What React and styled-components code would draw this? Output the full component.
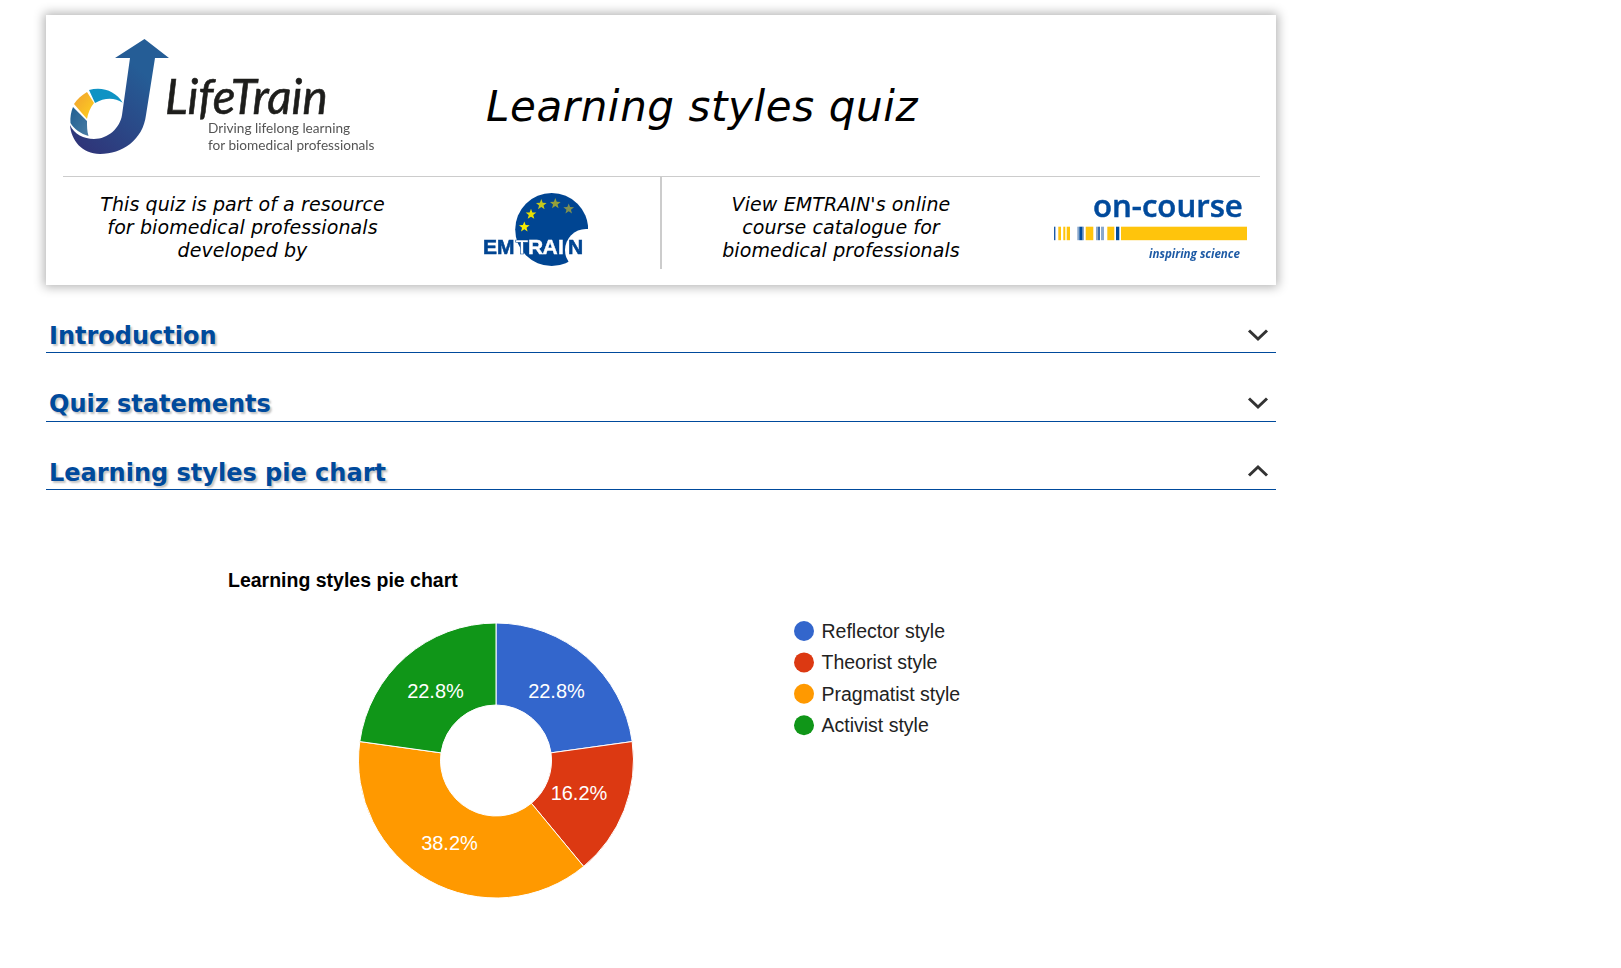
import React from "react";
import styled, { createGlobalStyle } from "styled-components";

const GlobalStyle = createGlobalStyle`
  html, body {
    margin: 0;
    padding: 0;
    background: #ffffff;
  }
  body {
    font-family: "DejaVu Sans", Verdana, sans-serif;
  }
`;

const Page = styled.div`
  width: 1230px;
  margin-left: 46px;
  padding-top: 15px;
`;

const HeaderCard = styled.header`
  height: 270px;
  box-sizing: border-box;
  padding: 0 16px 0 17px;
  background: #ffffff;
  box-shadow: 0 0 10px 2px rgba(0, 0, 0, 0.3);
  display: flex;
  flex-direction: column;
`;

const TopRow = styled.div`
  height: 161px;
  display: flex;
  align-items: flex-start;
  border-bottom: 1px solid #cccccc;
`;

const LifeTrainLogo = styled.svg`
  width: 340px;
  height: 130px;
  margin-top: 24px;
  flex: none;
  filter: blur(0.3px);
`;

const Title = styled.h1`
  margin: 68px 0 0 83px;
  font-size: 42px;
  line-height: 48px;
  letter-spacing: 0.6px;
  font-weight: 400;
  font-style: italic;
  color: #000000;
  white-space: nowrap;
`;

const BottomRow = styled.div`
  height: 92px;
  display: flex;
`;

const Half = styled.div`
  flex: none;
  width: ${(props) => props.$width}px;
  display: flex;
  align-items: flex-start;
  border-right: ${(props) => (props.$divided ? "2px solid #cccccc" : "none")};
  box-sizing: border-box;
`;

const Blurb = styled.p`
  margin: 16px 0 0;
  flex: none;
  width: ${(props) => props.$width}px;
  font-size: 19px;
  line-height: 23px;
  letter-spacing: 0.1px;
  font-style: italic;
  text-align: center;
  color: #000000;
`;

const EmtrainLogo = styled.svg`
  width: 110px;
  height: 80px;
  margin: 12px 0 0 ${(props) => props.$gap}px;
  flex: none;
  filter: blur(0.3px);
`;

const OnCourseLogo = styled.svg`
  width: 200px;
  height: 92px;
  margin: 2px 0 0 ${(props) => props.$gap}px;
  flex: none;
  filter: blur(0.3px);
`;

const Section = styled.section`
  margin-top: ${(props) => props.$top}px;
`;

const SectionHead = styled.div`
  height: 36px;
  box-sizing: border-box;
  padding: 0 4px ${(props) => props.$lift || 0}px 3px;
  display: flex;
  align-items: center;
  justify-content: space-between;
  border-bottom: 1px solid #004a9c;
`;

const SectionTitle = styled.h2`
  margin: 2px 0 0;
  font-size: 24px;
  line-height: 34px;
  font-weight: 700;
  color: #004a9c;
  text-shadow: 2px 2px 2px #c4c4c4;
`;

const Chevron = styled.svg`
  width: 24px;
  height: 14px;
  flex: none;
  margin: 0 2px ${(props) => (props.$open ? "2px" : "0")} 0;
  transform: ${(props) => (props.$open ? "rotate(180deg)" : "none")};
`;

const ChartSvg = styled.svg`
  display: block;
  width: 1230px;
  height: 470px;
`;

const slices = [
  { label: "Reflector style", value: 22.8, color: "#3366cc", tx: 556.5, ty: 698 },
  { label: "Theorist style", value: 16.2, color: "#dc3912", tx: 579, ty: 800 },
  { label: "Pragmatist style", value: 38.2, color: "#ff9900", tx: 449.5, ty: 850 },
  { label: "Activist style", value: 22.8, color: "#109618", tx: 435.5, ty: 698 },
];

const CX = 496;
const CY = 760.5;
const R = 137.5;
const INNER = 55.5;
// chart drawing is in page coordinates, this is the top of the chart box
const CHART_TOP = 490;

const polar = (radius, angle) => [
  CX + radius * Math.sin(angle),
  CY - radius * Math.cos(angle),
];

const slicePath = (from, to) => {
  const a = (from / 100) * Math.PI * 2;
  const b = (to / 100) * Math.PI * 2;
  const large = to - from > 50 ? 1 : 0;
  const [x1, y1] = polar(R, a);
  const [x2, y2] = polar(R, b);
  const [x3, y3] = polar(INNER, b);
  const [x4, y4] = polar(INNER, a);
  return `M${x1} ${y1}A${R} ${R} 0 ${large} 1 ${x2} ${y2}L${x3} ${y3}A${INNER} ${INNER} 0 ${large} 0 ${x4} ${y4}Z`;
};

function Donut() {
  let running = 0;
  return (
    <ChartSvg viewBox={`46 ${CHART_TOP} 1230 470`}>
      <text x="228" y="587" fontFamily="'Liberation Sans', Arial, sans-serif" fontSize="19.5" fontWeight="700" fill="#000">
        Learning styles pie chart
      </text>
      {slices.map((s) => {
        const from = running;
        running += s.value;
        return <path key={s.label} d={slicePath(from, running)} fill={s.color} stroke="#fff" strokeWidth="1" />;
      })}
      {slices.map((s) => (
        <text key={s.label} x={s.tx} y={s.ty} textAnchor="middle" fontFamily="'Liberation Sans', Arial, sans-serif" fontSize="20" fill="#fff">
          {s.value}%
        </text>
      ))}
      {slices.map((s, i) => (
        <g key={s.label}>
          <circle cx="804" cy={631 + i * 31.4} r="10" fill={s.color} />
          <text x="821.5" y={638 + i * 31.4} fontFamily="'Liberation Sans', Arial, sans-serif" fontSize="19.5" fill="#222">
            {s.label}
          </text>
        </g>
      ))}
    </ChartSvg>
  );
}

function ChevronIcon({ open }) {
  return (
    <Chevron viewBox="0 0 24 14" $open={open}>
      <path d="M3 2.5 L12 11 L21 2.5" fill="none" stroke="#333" strokeWidth="3" />
    </Chevron>
  );
}

function LifeTrain() {
  return (
    <LifeTrainLogo viewBox="63 39 340 130">
      <defs>
        <linearGradient id="lt" x1="0.75" y1="0.3" x2="0.2" y2="1">
          <stop offset="0" stopColor="#255d96" />
          <stop offset="1" stopColor="#2f3579" />
        </linearGradient>
        <linearGradient id="lo" x1="1" y1="1" x2="0" y2="0">
          <stop offset="0" stopColor="#ffd21f" />
          <stop offset="1" stopColor="#f0a030" />
        </linearGradient>
        <linearGradient id="lg" x1="0" y1="0" x2="1" y2="1">
          <stop offset="0" stopColor="#1f5f92" />
          <stop offset="1" stopColor="#4a7ca3" />
        </linearGradient>
      </defs>
      <path
        d="M144.5 39 L169 58 L155 58 L146 115 C143 140 122 154 100 154 C82 154 71 140 70 125 C74 134 84 139 94 139 C108 139 120 128 122 115 L130 58 L115 58 Z"
        fill="url(#lt)"
      />
      <path d="M89 90 C102 86 116 91 122.7 102.7 C114 97 104 98 95 103 Z" fill="#0f93c4" />
      <path d="M74 104 C77 99 82 95 87 92 L94 103 C90 108 88 113 87 119 Z" fill="url(#lo)" />
      <path d="M73 107 L87 121 C87 126 87 131 88.5 136 C81 134 74 129 70.5 123 C70 117 71 112 73 107 Z" fill="url(#lg)" />
      <text x="165" y="113.5" fontFamily="Lato, sans-serif" fontStyle="italic" fontSize="47.5" fill="#1d1d1b" stroke="#1d1d1b" strokeWidth="0.6">
        LifeTrain
      </text>
      <text x="208" y="133" fontFamily="Lato, sans-serif" fontSize="13.65" fill="#555">
        Driving lifelong learning
      </text>
      <text x="208" y="150" fontFamily="Lato, sans-serif" fontSize="13.65" fill="#555">
        for biomedical professionals
      </text>
    </LifeTrainLogo>
  );
}

const stars = [
  [524.3, 226, "#f7ec00"],
  [531, 213.3, "#e8e000"],
  [541.3, 203.7, "#c4c81c"],
  [555.3, 202.7, "#94a03a"],
  [568.7, 208, "#7f9050"],
];

const starPath = (cx, cy, r) => {
  let d = "";
  for (let i = 0; i < 10; i++) {
    const rad = i % 2 ? r * 0.42 : r;
    const ang = (i * Math.PI) / 5;
    d += `${i ? "L" : "M"}${cx + rad * Math.sin(ang)} ${cy - rad * Math.cos(ang)}`;
  }
  return d + "Z";
};

function Emtrain() {
  return (
    <EmtrainLogo viewBox="478 188 110 80" $gap={56}>
      <circle cx="551.7" cy="228.5" r="36.5" fill="#004592" />
      <circle cx="586" cy="249" r="21" fill="#fff" />
      {stars.map(([x, y, c]) => (
        <path key={x} d={starPath(x, y, 5.6)} fill={c} />
      ))}
      <text y="253" fontFamily="'Liberation Sans', Arial, sans-serif" fontWeight="700" fontSize="21" fill="#004592" stroke="#004592" strokeWidth="0.6">
        <tspan x="483 497">EM</tspan>
        <tspan x="515.5" fill="#fff">T</tspan>
        <tspan x="528 542.5 558" fill="#fff" stroke="#fff" strokeWidth="0.4">RAI</tspan>
        <tspan x="568">N</tspan>
      </text>
    </EmtrainLogo>
  );
}

const barStripes = [
  [4, 1.4, "#1d5aa5"], [8.3, 2.7, "#ffc40c"], [13.3, 2, "#ffc40c"], [16.7, 3.3, "#ffc40c"],
  [27.3, 2, "#8aa8cc"], [29.3, 3.4, "#004a9c"], [32.7, 1.3, "#8aa8cc"], [35.7, 7.6, "#ffc40c"],
  [46, 1.7, "#8aa8cc"], [47.7, 2.3, "#3a6cab"], [51, 3, "#8aa8cc"], [57.3, 7, "#ffc40c"],
  [66, 3.3, "#004a9c"], [71, 126, "#ffc40c"],
];

function OnCourse() {
  return (
    <OnCourseLogo viewBox="0 -8 200 92" $gap={30}>
      <text x="43" y="29.5" fontFamily="'Open Sans', sans-serif" fontWeight="600" fontSize="31.2" fill="#004a9c" stroke="#004a9c" strokeWidth="0.5">
        on-course
      </text>
      {barStripes.map(([x, w, c]) => (
        <rect key={x} x={x} y="39.7" width={w} height="13.5" fill={c} />
      ))}
      <text x="99" y="71" fontFamily="'Open Sans', sans-serif" fontStyle="italic" fontWeight="700" fontSize="11.6" fill="#1d5aa5">
        inspiring science
      </text>
    </OnCourseLogo>
  );
}

export default function App() {
  return (
    <>
      <GlobalStyle />
      <Page>
        <HeaderCard>
          <TopRow>
            <LifeTrain />
            <Title>Learning styles quiz</Title>
          </TopRow>
          <BottomRow>
            <Half $width={599} $divided>
              <Blurb $width={359}>
                This quiz is part of a resource
                <br />
                for biomedical professionals
                <br />
                developed by
              </Blurb>
              <Emtrain />
            </Half>
            <Half $width={597}>
              <Blurb $width={358}>
                View EMTRAIN's online
                <br />
                course catalogue for
                <br />
                biomedical professionals
              </Blurb>
              <OnCourse />
            </Half>
          </BottomRow>
        </HeaderCard>
        <Section $top={32}>
          <SectionHead>
            <SectionTitle>Introduction</SectionTitle>
            <ChevronIcon />
          </SectionHead>
        </Section>
        <Section $top={33}>
          <SectionHead $lift={2}>
            <SectionTitle>Quiz statements</SectionTitle>
            <ChevronIcon />
          </SectionHead>
        </Section>
        <Section $top={32}>
          <SectionHead>
            <SectionTitle>Learning styles pie chart</SectionTitle>
            <ChevronIcon open />
          </SectionHead>
          <Donut />
        </Section>
      </Page>
    </>
  );
}
